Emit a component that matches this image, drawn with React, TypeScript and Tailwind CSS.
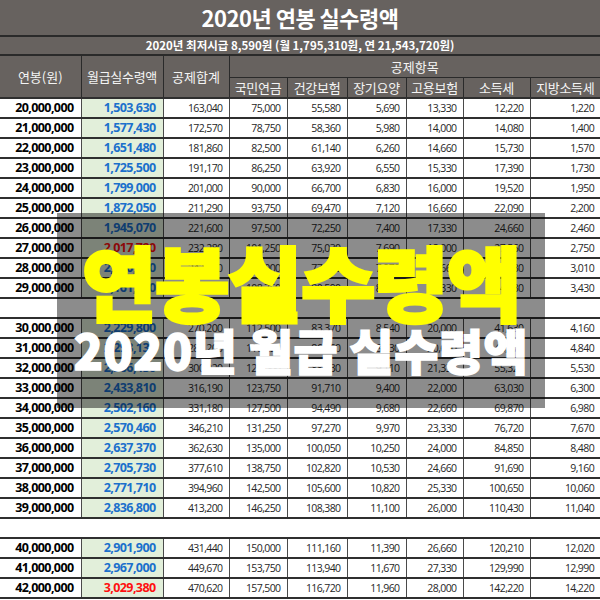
type Row = { v: string[]; red?: boolean } | null;

const rows: Row[] = [
  { v: ["20,000,000", "1,503,630", "163,040", "75,000", "55,580", "5,690", "13,330", "12,220", "1,220"] },
  { v: ["21,000,000", "1,577,430", "172,570", "78,750", "58,360", "5,980", "14,000", "14,080", "1,400"] },
  { v: ["22,000,000", "1,651,480", "181,860", "82,500", "61,140", "6,260", "14,660", "15,730", "1,570"] },
  { v: ["23,000,000", "1,725,500", "191,170", "86,250", "63,920", "6,550", "15,330", "17,390", "1,730"] },
  { v: ["24,000,000", "1,799,000", "201,000", "90,000", "66,700", "6,830", "16,000", "19,520", "1,950"] },
  { v: ["25,000,000", "1,872,050", "211,290", "93,750", "69,470", "7,120", "16,660", "22,090", "2,200"] },
  { v: ["26,000,000", "1,945,070", "221,600", "97,500", "72,250", "7,400", "17,330", "24,660", "2,460"] },
  { v: ["27,000,000", "2,017,720", "232,280", "101,250", "75,030", "7,690", "18,000", "27,560", "2,750"], red: true },
  { v: ["28,000,000", "2,090,750", "242,580", "105,000", "77,810", "7,970", "18,660", "30,130", "3,010"] },
  { v: ["29,000,000", "2,161,980", "254,690", "108,750", "80,590", "8,260", "19,330", "34,330", "3,430"] },
  null,
  { v: ["30,000,000", "2,229,800", "270,200", "112,500", "83,370", "8,540", "20,000", "41,630", "4,160"] },
  { v: ["31,000,000", "2,298,130", "285,200", "116,250", "86,150", "8,830", "20,660", "48,470", "4,840"] },
  { v: ["32,000,000", "2,366,450", "300,220", "120,000", "88,930", "9,110", "21,330", "55,320", "5,530"] },
  { v: ["33,000,000", "2,433,810", "316,190", "123,750", "91,710", "9,400", "22,000", "63,030", "6,300"] },
  { v: ["34,000,000", "2,502,160", "331,180", "127,500", "94,490", "9,680", "22,660", "69,870", "6,980"] },
  { v: ["35,000,000", "2,570,460", "346,210", "131,250", "97,270", "9,970", "23,330", "76,720", "7,670"] },
  { v: ["36,000,000", "2,637,370", "362,630", "135,000", "100,050", "10,250", "24,000", "84,850", "8,480"] },
  { v: ["37,000,000", "2,705,730", "377,610", "138,750", "102,820", "10,530", "24,660", "91,690", "9,160"] },
  { v: ["38,000,000", "2,771,710", "394,960", "142,500", "105,600", "10,820", "25,330", "100,650", "10,060"] },
  { v: ["39,000,000", "2,836,800", "413,200", "146,250", "108,380", "11,100", "26,000", "110,430", "11,040"] },
  null,
  { v: ["40,000,000", "2,901,900", "431,440", "150,000", "111,160", "11,390", "26,660", "120,210", "12,020"] },
  { v: ["41,000,000", "2,967,000", "449,670", "153,750", "113,940", "11,670", "27,330", "129,990", "12,990"] },
  { v: ["42,000,000", "3,029,380", "470,620", "157,500", "116,720", "11,960", "28,000", "142,220", "14,220"], red: true },
];

const subHeads = ["국민연금", "건강보험", "장기요양", "고용보험", "소득세", "지방소득세"];

const App = () => {
  return (
    <div className="relative w-[600px] h-[600px] overflow-hidden bg-white font-['Open_Sans','Noto_Sans_CJK_KR',sans-serif]">
      <table className="w-[600px] table-fixed border-collapse">
        <colgroup>
          <col className="w-[81px]" />
          <col className="w-[82px]" />
          <col className="w-[66px]" />
          <col className="w-[58px]" />
          <col className="w-[60px]" />
          <col className="w-[59px]" />
          <col className="w-[57px]" />
          <col className="w-[67px]" />
          <col className="w-[70px]" />
        </colgroup>
        <thead className="bg-[#67625f] text-[#f4f4f4]">
          <tr>
            <th colSpan={9} className="h-[36px] border-b-2 border-[#2a2a2a] p-0 text-[22px] font-bold tracking-[-0.5px] text-white font-['Noto_Sans_CJK_KR',sans-serif]">
              2020년 연봉 실수령액
            </th>
          </tr>
          <tr>
            <th colSpan={9} className="h-[19px] border-b-2 border-[#2a2a2a] p-0 text-[11.5px] font-bold leading-none text-white font-['Noto_Sans_CJK_KR',sans-serif]">
              2020년 최저시급 8,590원 (월 1,795,310원, 연 21,543,720원)
            </th>
          </tr>
          <tr className="font-['Noto_Sans_CJK_KR',sans-serif] text-[13px] font-normal">
            <th rowSpan={2} className="border border-[#2a2a2a] border-l-0 p-0 font-normal">연봉(원)</th>
            <th rowSpan={2} className="border border-[#2a2a2a] p-0 font-normal tracking-[-0.3px]">월급실수령액</th>
            <th rowSpan={2} className="border border-[#2a2a2a] p-0 font-normal">공제합계</th>
            <th colSpan={6} className="h-[22px] border border-[#2a2a2a] border-r-0 p-0 font-normal">공제항목</th>
          </tr>
          <tr className="font-['Noto_Sans_CJK_KR',sans-serif] text-[13px]">
            {subHeads.map((h, i) => (
              <th
                key={h}
                className={`h-[21px] border border-[#2a2a2a] p-0 font-normal tracking-[-0.3px] ${i === 5 ? "border-r-0" : ""}`}
              >
                {h}
              </th>
            ))}
          </tr>
        </thead>
        <tbody className="leading-[16px]">
          {rows.map((r, i) =>
            r === null ? (
              <tr key={i}>
                <td colSpan={9} className="h-[20px] border-y-2 border-[#2f2f2f] p-0" />
              </tr>
            ) : (
              <tr key={i}>
                <td className="h-[20px] border-y-2 border-r border-y-[#2f2f2f] border-r-[#4a4a4a] p-0 pr-[7px] text-right text-[12.5px] font-bold tracking-[-0.6px] text-black">
                  {r.v[0]}
                </td>
                <td
                  className={`border-x border-y-2 border-x-[#4a4a4a] border-y-[#2f2f2f] bg-[#e2efda] p-0 pr-[7px] text-right text-[12.5px] font-bold tracking-[-0.6px] ${
                    r.red ? "text-[#ff1010]" : "text-[#1b70cc]"
                  }`}
                >
                  {r.v[1]}
                </td>
                {r.v.slice(2).map((c, j) => (
                  <td
                    key={j}
                    className={`border-x border-y-2 border-x-[#4a4a4a] border-y-[#2f2f2f] p-0 pr-[6px] text-right text-[10.5px] tracking-[-0.6px] text-[#262626] ${
                      j === 6 ? "border-r-0" : ""
                    }`}
                  >
                    {c}
                  </td>
                ))}
              </tr>
            )
          )}
        </tbody>
      </table>

      <div className="absolute left-[57px] top-[213px] flex h-[195px] w-[488px] flex-col items-center bg-black/45 font-['Noto_Sans_CJK_KR',sans-serif] font-black">
        <div className="mt-[26px] text-[81px] leading-none tracking-[-1.5px] text-[#ffff00] [-webkit-text-stroke:3px_#ffff00]">
          연봉실수령액
        </div>
        <div className="mt-[5px] text-[48px] leading-none tracking-[0.5px] text-white [-webkit-text-stroke:1.5px_#ffffff]">
          2020년 월급 실수령액
        </div>
      </div>
    </div>
  );
};

export default App;
